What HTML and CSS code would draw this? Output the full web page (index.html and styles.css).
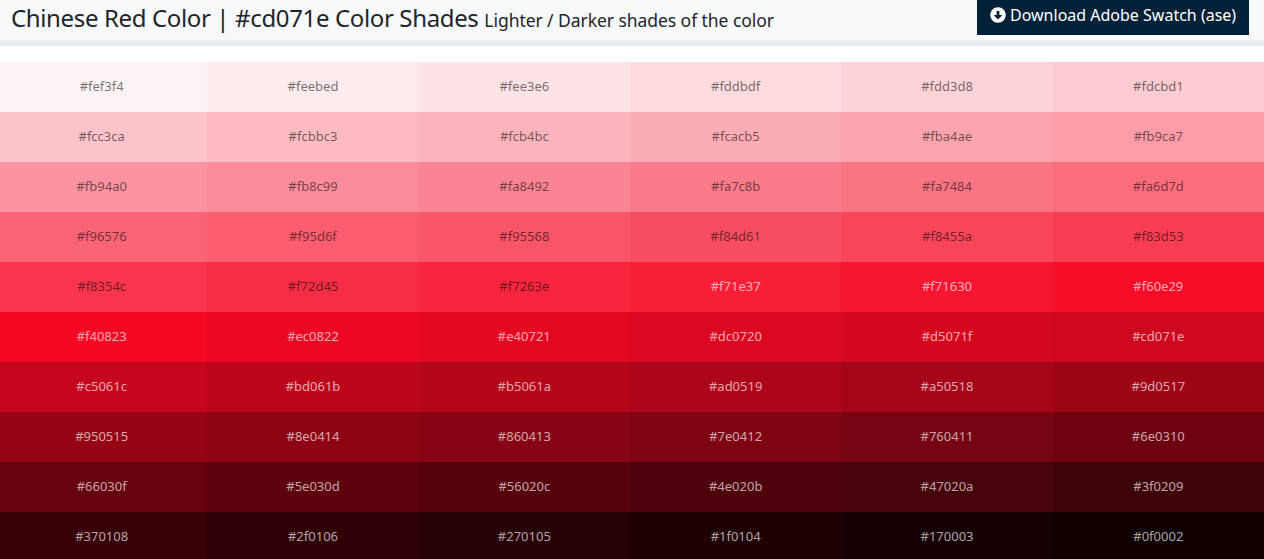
FILE: index.html
```html
<!DOCTYPE html>
<html lang="en">
<head>
<meta charset="utf-8">
<title>Chinese Red Color Shades</title>
<link rel="stylesheet" href="styles.css">
</head>
<body>
<header class="page-header">
  <h1 class="title">Chinese Red Color | #cd071e Color Shades <small class="subtitle">Lighter / Darker shades of the color</small></h1>
  <a class="download" href="#"><svg class="download-icon" viewBox="0 0 512 512"><path fill="currentColor" d="M504 256c0 137-111 248-248 248S8 393 8 256 119 8 256 8s248 111 248 248zM212 140v116h-70.9c-10.7 0-16.1 13-8.5 20.5l114.9 114.3c4.7 4.7 12.2 4.7 16.9 0l114.9-114.3c7.6-7.6 2.2-20.5-8.5-20.5H300V140c0-6.6-5.4-12-12-12h-64c-6.6 0-12 5.4-12 12z"/></svg>Download Adobe Swatch (ase)</a>
</header>
<main class="shades">
  <div class="cell on-light" style="background:#fef3f4">#fef3f4</div>
  <div class="cell on-light" style="background:#feebed">#feebed</div>
  <div class="cell on-light" style="background:#fee3e6">#fee3e6</div>
  <div class="cell on-light" style="background:#fddbdf">#fddbdf</div>
  <div class="cell on-light" style="background:#fdd3d8">#fdd3d8</div>
  <div class="cell on-light" style="background:#fdcbd1">#fdcbd1</div>
  <div class="cell on-light" style="background:#fcc3ca">#fcc3ca</div>
  <div class="cell on-light" style="background:#fcbbc3">#fcbbc3</div>
  <div class="cell on-light" style="background:#fcb4bc">#fcb4bc</div>
  <div class="cell on-light" style="background:#fcacb5">#fcacb5</div>
  <div class="cell on-light" style="background:#fba4ae">#fba4ae</div>
  <div class="cell on-light" style="background:#fb9ca7">#fb9ca7</div>
  <div class="cell on-light" style="background:#fb94a0">#fb94a0</div>
  <div class="cell on-light" style="background:#fb8c99">#fb8c99</div>
  <div class="cell on-light" style="background:#fa8492">#fa8492</div>
  <div class="cell on-light" style="background:#fa7c8b">#fa7c8b</div>
  <div class="cell on-light" style="background:#fa7484">#fa7484</div>
  <div class="cell on-light" style="background:#fa6d7d">#fa6d7d</div>
  <div class="cell on-light" style="background:#f96576">#f96576</div>
  <div class="cell on-light" style="background:#f95d6f">#f95d6f</div>
  <div class="cell on-light" style="background:#f95568">#f95568</div>
  <div class="cell on-light" style="background:#f84d61">#f84d61</div>
  <div class="cell on-light" style="background:#f8455a">#f8455a</div>
  <div class="cell on-light" style="background:#f83d53">#f83d53</div>
  <div class="cell on-light" style="background:#f8354c">#f8354c</div>
  <div class="cell on-light" style="background:#f72d45">#f72d45</div>
  <div class="cell on-light" style="background:#f7263e">#f7263e</div>
  <div class="cell on-dark" style="background:#f71e37">#f71e37</div>
  <div class="cell on-dark" style="background:#f71630">#f71630</div>
  <div class="cell on-dark" style="background:#f60e29">#f60e29</div>
  <div class="cell on-dark" style="background:#f40823">#f40823</div>
  <div class="cell on-dark" style="background:#ec0822">#ec0822</div>
  <div class="cell on-dark" style="background:#e40721">#e40721</div>
  <div class="cell on-dark" style="background:#dc0720">#dc0720</div>
  <div class="cell on-dark" style="background:#d5071f">#d5071f</div>
  <div class="cell on-dark" style="background:#cd071e">#cd071e</div>
  <div class="cell on-dark" style="background:#c5061c">#c5061c</div>
  <div class="cell on-dark" style="background:#bd061b">#bd061b</div>
  <div class="cell on-dark" style="background:#b5061a">#b5061a</div>
  <div class="cell on-dark" style="background:#ad0519">#ad0519</div>
  <div class="cell on-dark" style="background:#a50518">#a50518</div>
  <div class="cell on-dark" style="background:#9d0517">#9d0517</div>
  <div class="cell on-dark" style="background:#950515">#950515</div>
  <div class="cell on-dark" style="background:#8e0414">#8e0414</div>
  <div class="cell on-dark" style="background:#860413">#860413</div>
  <div class="cell on-dark" style="background:#7e0412">#7e0412</div>
  <div class="cell on-dark" style="background:#760411">#760411</div>
  <div class="cell on-dark" style="background:#6e0310">#6e0310</div>
  <div class="cell on-dark" style="background:#66030f">#66030f</div>
  <div class="cell on-dark" style="background:#5e030d">#5e030d</div>
  <div class="cell on-dark" style="background:#56020c">#56020c</div>
  <div class="cell on-dark" style="background:#4e020b">#4e020b</div>
  <div class="cell on-dark" style="background:#47020a">#47020a</div>
  <div class="cell on-dark" style="background:#3f0209">#3f0209</div>
  <div class="cell on-dark" style="background:#370108">#370108</div>
  <div class="cell on-dark" style="background:#2f0106">#2f0106</div>
  <div class="cell on-dark" style="background:#270105">#270105</div>
  <div class="cell on-dark" style="background:#1f0104">#1f0104</div>
  <div class="cell on-dark" style="background:#170003">#170003</div>
  <div class="cell on-dark" style="background:#0f0002">#0f0002</div>
</main>
</body>
</html>
```
FILE: styles.css
```css
html, body {
  margin: 0;
  padding: 0;
  height: 100%;
  overflow: hidden;
  background: #fff;
  font-family: "Noto Sans", "Liberation Sans", sans-serif;
  color: #212529;
}

.page-header {
  display: flex;
  justify-content: space-between;
  align-items: flex-start;
  height: 40px;
  padding: 0 15px 0 11px;
  background: #f8f9fa;
  border-bottom: 6px solid #e9ecef;
}

.title {
  margin: 0;
  font-size: 24px;
  font-weight: 400;
  line-height: 36px;
  white-space: nowrap;
  letter-spacing: -0.36px;
}

.subtitle {
  font-size: 17.5px;
  letter-spacing: -0.06px;
}

.download {
  display: flex;
  align-items: flex-start;
  gap: 4px;
  height: 35px;
  padding: 3px 13px 0;
  box-sizing: border-box;
  width: 272px;
  background: #002137;
  color: #fff;
  font-size: 16px;
  line-height: 24px;
  text-decoration: none;
  white-space: nowrap;
}

.download-icon {
  width: 16px;
  height: 16px;
  flex: none;
  margin-top: 4px;
}

.shades {
  display: grid;
  grid-template-columns: repeat(6, 1fr);
  grid-auto-rows: 50px;
  width: 1268px;
  margin: 16px 0 0 -4px;
}

.cell {
  display: flex;
  align-items: center;
  justify-content: center;
  padding-bottom: 2px;
  box-sizing: border-box;
  font-size: 13px;
}

.on-light { color: rgba(0, 0, 0, 0.55); }
.on-dark { color: rgba(255, 255, 255, 0.65); }
```
